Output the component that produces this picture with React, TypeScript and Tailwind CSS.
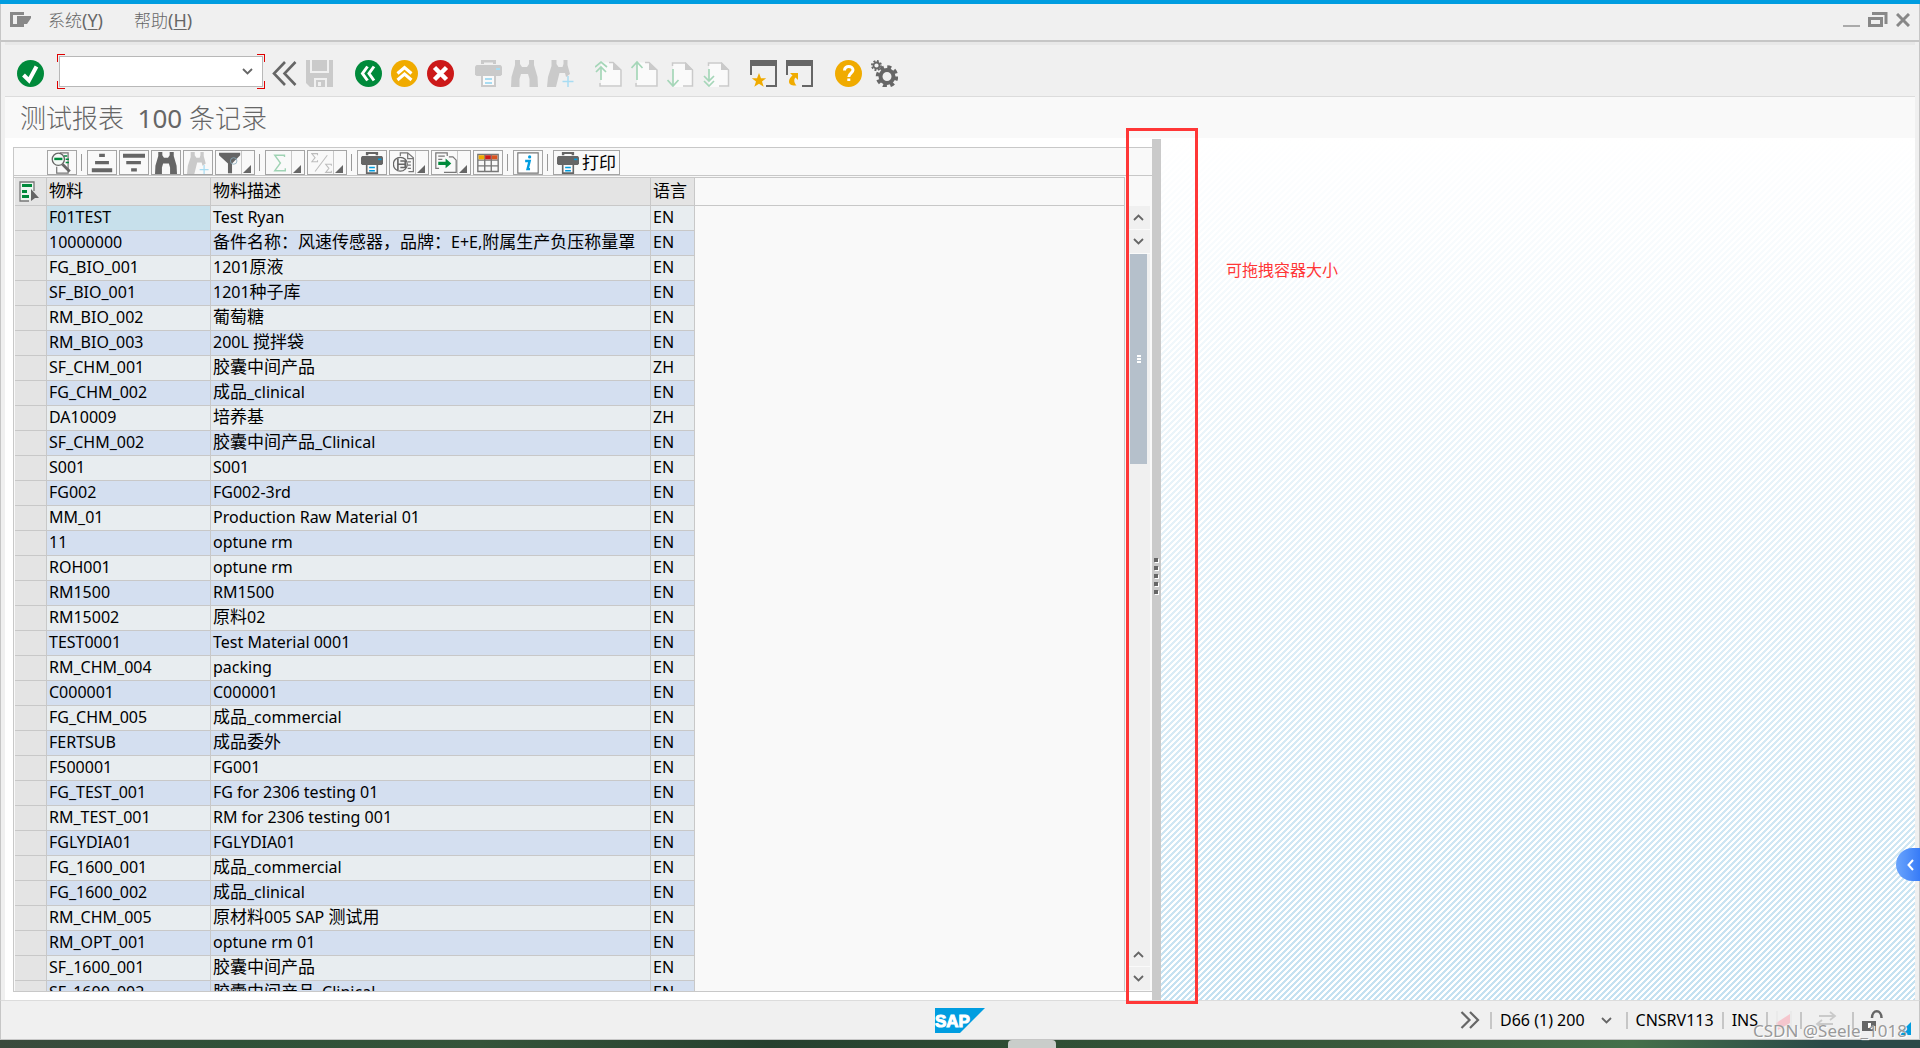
import { useState } from "react";
import type { ReactNode } from "react";

const rows: [string, string, string][] = [
  ["F01TEST", "Test Ryan", "EN"],
  ["10000000", "备件名称：风速传感器，品牌：E+E,附属生产负压称量罩", "EN"],
  ["FG_BIO_001", "1201原液", "EN"],
  ["SF_BIO_001", "1201种子库", "EN"],
  ["RM_BIO_002", "葡萄糖", "EN"],
  ["RM_BIO_003", "200L 搅拌袋", "EN"],
  ["SF_CHM_001", "胶囊中间产品", "ZH"],
  ["FG_CHM_002", "成品_clinical", "EN"],
  ["DA10009", "培养基", "ZH"],
  ["SF_CHM_002", "胶囊中间产品_Clinical", "EN"],
  ["S001", "S001", "EN"],
  ["FG002", "FG002-3rd", "EN"],
  ["MM_01", "Production Raw Material 01", "EN"],
  ["11", "optune rm", "EN"],
  ["ROH001", "optune rm", "EN"],
  ["RM1500", "RM1500", "EN"],
  ["RM15002", "原料02", "EN"],
  ["TEST0001", "Test Material 0001", "EN"],
  ["RM_CHM_004", "packing", "EN"],
  ["C000001", "C000001", "EN"],
  ["FG_CHM_005", "成品_commercial", "EN"],
  ["FERTSUB", "成品委外", "EN"],
  ["F500001", "FG001", "EN"],
  ["FG_TEST_001", "FG for 2306 testing 01", "EN"],
  ["RM_TEST_001", "RM for 2306 testing 001", "EN"],
  ["FGLYDIA01", "FGLYDIA01", "EN"],
  ["FG_1600_001", "成品_commercial", "EN"],
  ["FG_1600_002", "成品_clinical", "EN"],
  ["RM_CHM_005", "原材料005 SAP 测试用", "EN"],
  ["RM_OPT_001", "optune rm 01", "EN"],
  ["SF_1600_001", "胶囊中间产品", "EN"],
  ["SF_1600_002", "胶囊中间产品_Clinical", "EN"],
];

// Chinese runs are set one step larger than the latin text around them
function Mixed({ text, cjk = "text-[17px]" }: { text: string; cjk?: string }) {
  const parts = text.split(/([\u3000-\u9fff\uff00-\uffef]+)/);
  return (
    <>
      {parts.map((p, i) =>
        i % 2 ? (
          <span key={i} className={cjk}>
            {p}
          </span>
        ) : (
          p
        )
      )}
    </>
  );
}

function Svg({ size = 27, children }: { size?: number; children: ReactNode }) {
  return (
    <svg width={size} height={size} viewBox="0 0 27 27" fill="none" className="block shrink-0" aria-hidden="true">
      {children}
    </svg>
  );
}

const Check = () => (
  <Svg>
    <circle cx="13.5" cy="13.5" r="13.5" fill="#008a3b" />
    <path d="M6.500 15l5.500 5.500L19.500 6.500" stroke="#fff" strokeWidth="4" />
  </Svg>
);

const Save = () => (
  <Svg>
    <path d="M0 0h4v13h19V0h4v27H21V18H8v9H4l-4-4z" fill="#cacaca" />
    <path d="M6 0h15v11H6zM10 20h9v7h-9z" fill="#cacaca" />
    <path d="M12 22h3v4h-3z" fill="#f0f0f0" />
  </Svg>
);

const Back = () => (
  <Svg>
    <circle cx="13.5" cy="13.5" r="13.5" fill="#008a3b" />
    <path d="M12.500 6.500l-5 7 5 7M19 6.500l-5 7 5 7" stroke="#fff" strokeWidth="3" />
  </Svg>
);

const Up = () => (
  <Svg>
    <circle cx="13.5" cy="13.5" r="13.5" fill="#f0ab00" />
    <path d="M6.500 13.500l7-6 7 6M6.500 20l7-6 7 6" stroke="#fff" strokeWidth="3" />
  </Svg>
);

const Cancel = () => (
  <Svg>
    <circle cx="13.5" cy="13.5" r="13.5" fill="#cc1919" />
    <path d="M7.500 7.500l12 12M19.500 7.500l-12 12" stroke="#fff" strokeWidth="4.500" />
  </Svg>
);

function Printer({ color = "#666", blue = "#009de0", size = 27 }) {
  return (
    <Svg size={size}>
      <path d="M6 0h15v4h-3V2.500H9V4H6z" fill={color} />
      <path d="M1.500 5h24l1.500 1.500v8L25.500 16h-24L0 14.500v-8z" fill={color} />
      <path d="M21 8h4v2h-4z" fill={blue} />
      <path d="M7 16v10h13V16" fill="#fafafa" stroke={color} strokeWidth="2" />
      <path d="M10 18h7v2h-7zM10 22h7v2h-7z" fill={blue} />
    </Svg>
  );
}

function Binoculars({ color = "#666", plus = false, size = 27 }) {
  return (
    <Svg size={size}>
      {plus ? (
        <>
          <path d="M4.500 0h5v4l2 3h4l1-3V0h4v5l2.500 9-4 3-1-4h-5.500L9 27H0l1-10 3.500-11z" fill={color} />
          <path d="M21 16v11M15.500 21.500h11" stroke="#a8dcf2" strokeWidth="1.500" />
        </>
      ) : (
        <path d="M4 0h5v4l2 3h5l2-3V0h5v5l3.500 12L27 27h-8.500v-8L17 14h-7l-1.500 5v8H0l.5-10L4 5z" fill={color} />
      )}
    </Svg>
  );
}

// page with a green arrow; n = number of arrow heads
function Page({ up = false, n = 1 }) {
  return (
    <Svg>
      <path d="M6 2.500h12l7 7V27H6z" fill="#fafafa" />
      <path d={up ? "M14 2.500h4l8 7.500v16H5v-3" : "M5.500 6V3h13l7 7v16H16"} stroke="#cacaca" strokeWidth="1.500" />
      <path d="M18 2l8 8h-8z" fill="#cacaca" />
      {up ? (
        <path d={n === 2 ? "M6 20V8M0 7l6-5 6 5M1 12l5-5 5 5" : "M6 20V2M.5 8L6 2l5.500 6"} stroke="#a5d6b8" strokeWidth="1.700" />
      ) : (
        <path d={n === 2 ? "M6 9v12M1 16l5 5 5-5M1 21l5 5 5-5" : "M6 9v16M.5 20L6 26l5.500-6"} stroke="#a5d6b8" strokeWidth="1.700" />
      )}
    </Svg>
  );
}

function WindowIcon({ shortcut = false }) {
  return (
    <Svg>
      <path d="M0 0h27v6H0z" fill="#666" />
      <path d="M1 5v10M26 5v21H16" stroke="#666" strokeWidth="2" />
      {shortcut ? (
        <path d="M4 13h8v7l-2.500-2.500c-2 2-1.500 5 1 8C6 26 3 24.500 3 21.500c0-2.500 1.500-4.500 3.500-6z" fill="#f0ab00" />
      ) : (
        <path d="M9 13l2 5.300h5.200L12 21.600l1.700 5.200L9 23.700l-4.700 3.100L6 21.600l-4.200-3.300H7z" fill="#f0ab00" />
      )}
    </Svg>
  );
}

const Help = () => (
  <Svg>
    <circle cx="13.5" cy="13.5" r="13.5" fill="#f0ab00" />
    <path d="M9.500 10.500c0-5.500 8.500-5 8.500-.5 0 3-4.200 3.300-4.200 7" stroke="#fff" strokeWidth="3" />
    <path d="M12.300 18.500h3V21h-3z" fill="#fff" />
  </Svg>
);

const Gears = () => (
  <Svg>
    <circle cx="16" cy="16.5" r="6.5" stroke="#666" strokeWidth="4" />
    <circle cx="16" cy="16.5" r="9.5" stroke="#666" strokeWidth="3.500" strokeDasharray="4 3.460" />
    <circle cx="5.5" cy="5.5" r="3" stroke="#666" strokeWidth="1.800" />
    <circle cx="5.5" cy="5.5" r="4.6" stroke="#666" strokeWidth="1.800" strokeDasharray="1.900 1.700" />
  </Svg>
);

const Chevron = ({ up = false, color = "#666" }) => (
  <svg width="11" height="7" viewBox="0 0 11 7" fill="none" aria-hidden="true">
    <path d={up ? "M1 6l4.500-4.500L10 6" : "M1 1l4.500 4.500L10 1"} stroke={color} strokeWidth="1.800" />
  </svg>
);

const Details = () => (
  <Svg size={22}>
    <path d="M11 1h10v25H7v-8M11 1v3" stroke="#777" strokeWidth="1.500" />
    <path d="M16 5h4M18 9h4M18 13h4" stroke="#008a3b" strokeWidth="1.800" />
    <circle cx="9" cy="9" r="7.5" fill="#f5faf7" stroke="#666" strokeWidth="1.600" />
    <path d="M4 7h10v3H4z" fill="#008a3b" />
    <path d="M14 15l9 9" stroke="#666" strokeWidth="3.500" />
  </Svg>
);

const SortAsc = () => (
  <Svg size={22}>
    <path d="M10 2h7v4h-7zM5 11h17v4H5zM1 20h25v5H1z" fill="#666" />
  </Svg>
);

const SortDesc = () => (
  <Svg size={22}>
    <path d="M0 2h27v5H0zM4 11h18v4H4zM10 20h7v4h-7z" fill="#666" />
  </Svg>
);

const Filter = () => (
  <Svg size={22}>
    <path d="M0 1h26v3L16 14v12h-5V14L0 4z" fill="#666" />
    <circle cx="18" cy="11" r="4" stroke="#8ab" strokeWidth="1" />
  </Svg>
);

const Sum = () => (
  <Svg size={22}>
    <path d="M19 6V4H7l7 9.500L7 23h13v-3" stroke="#9fd3b4" strokeWidth="1.700" />
  </Svg>
);

const Subtotal = () => (
  <Svg size={22}>
    <path d="M8 4V2H1l4 5-4 5h7v-2M25 17v-2h-7l4 5-4 5h7v-2M5 24L20 4" stroke="#bdbdbd" strokeWidth="1.300" />
  </Svg>
);

const PrintView = () => (
  <Svg size={22}>
    <path d="M9 5V1h9l7 6v17h-6M18 1v7h7" stroke="#777" strokeWidth="1.500" />
    <path d="M18 12h4M18 16h4M18 20h4" stroke="#777" strokeWidth="1.500" />
    <circle cx="9" cy="15" r="8.5" fill="#f6f6f6" stroke="#666" strokeWidth="1.600" />
    <path d="M6 8v14M6 15h9M9 11h6v8H9" stroke="#666" strokeWidth="2" />
  </Svg>
);

const Export = () => (
  <Svg size={22}>
    <path d="M15 5V1H1v19h4M17 6h5l4 4v15H11" stroke="#777" strokeWidth="1.500" />
    <path d="M4 5h8M4 9h5" stroke="#777" strokeWidth="1.500" />
    <path d="M4 12h9V8l7 6-7 6v-4H4z" fill="#008a3b" />
  </Svg>
);

const Layout = () => (
  <Svg size={22}>
    <path d="M1 3h25v21H1zM1 10h25M1 17h25M9.500 4v20M17.500 4v20" stroke="#777" strokeWidth="1.700" />
    <path d="M2 4h7v5H2z" fill="#f0ab00" />
    <path d="M10 4h7v5h-7z" fill="#cc1919" />
    <path d="M18 4h7v5h-7z" fill="#d9531e" />
  </Svg>
);

const Info = () => (
  <Svg size={22}>
    <path d="M1 1h25v25H1z" fill="#fff" stroke="#777" strokeWidth="1.400" />
    <circle cx="15.5" cy="6" r="2" fill="#009de0" />
    <path d="M10 11h5.500l-2.500 10h3" stroke="#009de0" strokeWidth="3" />
  </Svg>
);

const SelectAll = () => (
  <svg width="21" height="21" viewBox="0 0 21 21" fill="none" className="block" aria-hidden="true">
    <path d="M15 10V1H1v19h9" fill="#eef5f0" stroke="#777" strokeWidth="1.300" />
    <path d="M3 3h10v3H3zM3 9h5v3H3zM3 14h7v3H3z" fill="#008a3b" />
    <path d="M12 8l8 9h-4l-4 3z" fill="#666" />
  </svg>
);

function ToolButton({ label, children }: { label: string; children: ReactNode }) {
  return (
    <button type="button" aria-label={label} title={label} className="block shrink-0">
      {children}
    </button>
  );
}

function GridButton({ label, menu = false, children }: { label: string; menu?: boolean; children: ReactNode }) {
  return (
    <button
      type="button"
      aria-label={label}
      title={label}
      className={`relative flex h-[25px] shrink-0 items-center border border-[#a5a5a5] px-[3px] ${menu ? "w-10" : "min-w-[30px]"}`}
    >
      {children}
      {menu && (
        <>
          <span className="absolute inset-y-0 left-[25px] border-l border-[#c8c8c8]" />
          <svg width="8" height="8" viewBox="0 0 8 8" className="absolute right-[3px] bottom-[1px]" aria-hidden="true">
            <path d="M8 0v8H0z" fill="#666" />
          </svg>
        </>
      )}
    </button>
  );
}

const GridSep = () => <span className="mx-0.5 mt-1 h-[17px] w-0.5 shrink-0 border-l border-[#999]" />;

const StatusSep = () => <span className="h-[17px] w-0.5 shrink-0 bg-[#c6c6c6]" />;

function MenuBar() {
  return (
    <header className="flex h-[38px] shrink-0 items-center border-x border-b-2 border-[#c6c6c6] bg-[#f0f0f0] px-[9px] pb-1 text-[#666]">
      <button type="button" aria-label="菜单">
        <svg width="22" height="16" viewBox="0 0 22 16" aria-hidden="true">
          <path d="M0 0h14v3H3v9h11v3H0zM7 4h14v2l-4 6H7z" fill="#888" />
        </svg>
      </button>
      <nav className="ml-4 flex flex-1 gap-[31px] text-[18px]">
        <button type="button">
          <Mixed text="系统" cjk="text-[17px] font-light" />(<u className="underline-offset-2">Y</u>)
        </button>
        <button type="button">
          <Mixed text="帮助" cjk="text-[17px] font-light" />(<u className="underline-offset-2">H</u>)
        </button>
      </nav>
      <div className="flex items-center gap-2">
        <button type="button" aria-label="最小化" className="pt-3">
          <span className="block h-0.5 w-[17px] bg-[#aaa]" />
        </button>
        <button type="button" aria-label="还原">
          <svg width="20" height="16" viewBox="0 0 20 16" fill="none" aria-hidden="true">
            <path d="M4 1.500h14V12" stroke="#888" strokeWidth="3" />
            <path d="M1.500 6.500h12v7h-12z" stroke="#888" strokeWidth="3" />
          </svg>
        </button>
        <button type="button" aria-label="关闭">
          <svg width="14" height="14" viewBox="0 0 14 14" aria-hidden="true">
            <path d="M1 1l12 12M13 1L1 13" stroke="#888" strokeWidth="3" />
          </svg>
        </button>
      </div>
    </header>
  );
}

function Toolbar() {
  const [command, setCommand] = useState("");
  return (
    <div className="flex h-[55px] shrink-0 items-center border-t-[3px] border-b border-t-[#e8e8e8] border-b-[#dcdcdc] bg-[#f0f0f0] pt-1.5 pl-3">
      <ToolButton label="回车">
        <Check />
      </ToolButton>
      <div className="relative mb-1 ml-[13px] p-0.5">
        <span className="absolute top-0 left-0 size-2 border-t border-l border-[#e00000]" />
        <span className="absolute top-0 right-0 size-2 border-t border-r border-[#e00000]" />
        <span className="absolute bottom-0 left-0 size-2 border-b border-l border-[#e00000]" />
        <span className="absolute right-0 bottom-0 size-2 border-r border-b border-[#e00000]" />
        <div className="flex h-[31px] w-[204px] items-center border border-[#b8b8b8] bg-white">
          <input
            type="text"
            aria-label="命令"
            value={command}
            onChange={(e) => setCommand(e.target.value)}
            className="h-full min-w-0 flex-1 px-1 outline-none"
          />
          <button type="button" aria-label="历史命令" className="px-[9px]">
            <Chevron />
          </button>
        </div>
      </div>
      <div className="ml-[7px] flex gap-[9px]">
        <ToolButton label="隐藏命令栏">
          <svg width="25" height="27" viewBox="0 0 25 27" fill="none" aria-hidden="true">
            <path d="M13 2L2 13.500 13 25M23.500 2l-11 11.500L23.500 25" stroke="#666" strokeWidth="2.600" />
          </svg>
        </ToolButton>
        <ToolButton label="保存">
          <Save />
        </ToolButton>
      </div>
      <div className="ml-[22px] flex gap-[9px]">
        <ToolButton label="返回"><Back /></ToolButton>
        <ToolButton label="退出"><Up /></ToolButton>
        <ToolButton label="取消"><Cancel /></ToolButton>
      </div>
      <div className="ml-[21px] flex gap-[9px]">
        <ToolButton label="打印"><Printer color="#cacaca" blue="#a8dcf2" /></ToolButton>
        <ToolButton label="查找"><Binoculars color="#cacaca" /></ToolButton>
        <ToolButton label="继续查找"><Binoculars color="#cacaca" plus /></ToolButton>
      </div>
      <div className="ml-[21px] flex gap-[9px]">
        <ToolButton label="第一页"><Page up n={2} /></ToolButton>
        <ToolButton label="上一页"><Page up /></ToolButton>
        <ToolButton label="下一页"><Page /></ToolButton>
        <ToolButton label="最后一页"><Page n={2} /></ToolButton>
      </div>
      <div className="ml-5 flex gap-[9px]">
        <ToolButton label="新建会话"><WindowIcon /></ToolButton>
        <ToolButton label="创建快捷方式"><WindowIcon shortcut /></ToolButton>
      </div>
      <div className="ml-[22px] flex gap-[9px]">
        <ToolButton label="帮助"><Help /></ToolButton>
        <ToolButton label="定制本地布局"><Gears /></ToolButton>
      </div>
    </div>
  );
}

function GridToolbar() {
  return (
    <div className="flex h-7 shrink-0 items-start gap-0.5 border-b border-[#c8c8c8] bg-[#f9f9f9] pt-0.5 pl-[33px]">
      <GridButton label="明细"><Details /></GridButton>
      <GridSep />
      <GridButton label="升序排序"><SortAsc /></GridButton>
      <GridButton label="降序排序"><SortDesc /></GridButton>
      <GridButton label="查找"><Binoculars size={22} /></GridButton>
      <GridButton label="继续查找"><Binoculars size={22} color="#cacaca" plus /></GridButton>
      <GridButton label="设置过滤器" menu><Filter /></GridButton>
      <GridSep />
      <GridButton label="总计" menu><Sum /></GridButton>
      <GridButton label="小计" menu><Subtotal /></GridButton>
      <GridSep />
      <GridButton label="打印"><Printer size={22} /></GridButton>
      <GridButton label="视图" menu><PrintView /></GridButton>
      <GridButton label="导出" menu><Export /></GridButton>
      <GridButton label="更改布局"><Layout /></GridButton>
      <GridSep />
      <GridButton label="信息"><Info /></GridButton>
      <GridSep />
      <GridButton label="打印列表">
        <Printer size={22} />
        <span className="ml-[3px] leading-none">
          <Mixed text="打印" />
        </span>
      </GridButton>
    </div>
  );
}

function DataTable() {
  const th = "h-7 border-r border-b border-[#c8c8c8] bg-[#e4e4e4] p-0 pb-0.5 pl-0.5 text-left leading-5 font-normal";
  const td = "h-[25px] border-r border-b border-[#c8c8c8] p-0 pb-0.5 pl-0.5 leading-[22px] whitespace-nowrap";
  return (
    <table className="w-[680px] table-fixed border-separate border-spacing-0">
      <colgroup>
        <col className="w-8" />
        <col className="w-[164px]" />
        <col className="w-[440px]" />
        <col className="w-11" />
      </colgroup>
      <thead>
        <tr>
          <th className={th}>
            <button type="button" aria-label="全选" className="block pt-0.5 pl-0.5">
              <SelectAll />
            </button>
          </th>
          <th className={th}><Mixed text="物料" /></th>
          <th className={th}><Mixed text="物料描述" /></th>
          <th className={th}><Mixed text="语言" /></th>
        </tr>
      </thead>
      <tbody>
        {rows.map(([id, text, lang], i) => (
          <tr key={id} className={i % 2 ? "bg-[#d4dff0]" : "bg-[#e8edf0]"}>
            <td className={`${td} bg-[#e4e4e4]`} />
            <td className={i === 0 ? `${td} bg-[#c7e0eb]` : td}>{id}</td>
            <td className={td}><Mixed text={text} /></td>
            <td className={td}>{lang}</td>
          </tr>
        ))}
      </tbody>
    </table>
  );
}

function ScrollButton({ up = false }) {
  return (
    <button
      type="button"
      aria-label={up ? "向上滚动" : "向下滚动"}
      className="flex h-6 w-full shrink-0 items-center justify-center border-b border-[#fafafa] bg-[#f0f0f0] pr-0.5"
    >
      <Chevron up={up} />
    </button>
  );
}

function Scrollbar() {
  return (
    <div className="mt-[29px] ml-1 flex w-[21px] flex-col bg-[#f0f0f0]">
      <ScrollButton up />
      <ScrollButton />
      <div className="flex-1">
        <div className="ml-px flex h-[210px] w-[17px] flex-col items-center justify-center gap-px bg-[#b5c0cb]">
          <span className="h-0.5 w-1 bg-white" />
          <span className="h-0.5 w-1 bg-white" />
          <span className="h-0.5 w-1 bg-white" />
        </div>
      </div>
      <ScrollButton up />
      <ScrollButton />
    </div>
  );
}

function Splitter() {
  return (
    <div
      role="separator"
      aria-orientation="vertical"
      className="mt-px flex w-[9px] shrink-0 cursor-col-resize flex-col items-center justify-center gap-1 bg-[#cacaca] pt-3 pr-px"
    >
      {[0, 1, 2, 3, 4].map((n) => (
        <span key={n} className="size-1 bg-[#666] shadow-[1px_1px_0_#fff]" />
      ))}
    </div>
  );
}

function StatusBar() {
  return (
    <footer className="relative flex h-10 shrink-0 items-center border border-[#c6c6c6] border-t-[#dcdcdc] bg-[#f0f0f0]">
      <div className="flex-1 pl-9" />
      <svg width="50" height="25" viewBox="0 0 50 25" role="img" aria-label="SAP">
        <path d="M0 0h50L25 25H0z" fill="#009de0" />
        <text x="0" y="19" fontSize="17" fontWeight="700" fill="#fff" stroke="#fff" strokeWidth="1" className="font-['Liberation_Sans',sans-serif]">
          SAP
        </text>
      </svg>
      <div className="flex flex-1 items-center justify-end gap-2 pr-9">
        <button type="button" aria-label="展开" className="pr-0.5">
          <svg width="20" height="18" viewBox="0 0 20 18" fill="none" aria-hidden="true">
            <path d="M1.500 1l8 8-8 8M10 1l8 8-8 8" stroke="#666" strokeWidth="2.200" />
          </svg>
        </button>
        <StatusSep />
        <button type="button" className="flex items-center gap-4 pr-1.5">
          D66 (1) 200
          <Chevron />
        </button>
        <StatusSep />
        <span>CNSRV113</span>
        <StatusSep />
        <span>INS</span>
        <StatusSep />
        <svg width="16" height="19" viewBox="0 0 16 19" aria-hidden="true">
          <path d="M0 12l14-9v9L2 19z" fill="#f5c6cd" />
          <path d="M1 0v17M15 0v17" stroke="#e4e4e4" />
        </svg>
        <StatusSep />
        <svg width="34" height="18" viewBox="0 0 34 18" fill="none" aria-hidden="true">
          <path d="M9 5h16M20 1l5 4-5 4M23 13H7M12 9l-5 4 5 4" stroke="#cacaca" strokeWidth="1.800" />
        </svg>
        <StatusSep />
        <svg width="21" height="21" viewBox="0 0 21 21" fill="none" aria-hidden="true">
          <path d="M0 11h14v10H0z" fill="#666" />
          <path d="M10 8c0-9 9.500-9 9.500 0" stroke="#666" strokeWidth="2.500" />
          <path d="M6 13h3v5H6z" fill="#fff" />
        </svg>
      </div>
      <svg width="13" height="13" viewBox="0 0 13 13" className="absolute right-2 bottom-1" aria-hidden="true">
        <path d="M13 0v13H0z" fill="#009de0" />
      </svg>
      <span className="absolute right-3 -bottom-1 text-[17px] leading-6 text-[#999] [text-shadow:1px_1px_0_#fff]">
        CSDN @Seele_1018
      </span>
    </footer>
  );
}

export default function App() {
  return (
    <div className="relative flex h-screen flex-col overflow-hidden bg-[#f0f0f0] font-['Noto_Sans','Noto_Sans_CJK_SC',sans-serif] text-[16px] text-black">
      <div className="h-1 shrink-0 bg-[#009de0]" />
      <MenuBar />
      <main className="flex min-h-0 flex-1 flex-col border-x border-[#c6c6c6] px-1">
        <Toolbar />
        <h1 className="flex h-[41px] shrink-0 items-center bg-[#f9f9f9] pt-0.5 pl-[15px] text-[26px] whitespace-pre text-[#666]">
          <span>
            <Mixed text="测试报表  100 条记录" cjk="font-light" />
          </span>
        </h1>
        <div className="flex min-h-0 flex-1 bg-white">
          <section className="mt-[9px] mb-2 ml-2 flex w-[1139px] shrink-0 flex-col border border-r-0 border-[#c8c8c8] bg-[#f9f9f9]">
            <GridToolbar />
            <div className="flex min-h-0 flex-1 pt-px">
              <div className="flex-1 overflow-hidden border-t border-r border-[#c8c8c8] bg-[#f9f9f9] pl-px">
                <div className="flex">
                  <DataTable />
                  <div className="h-7 flex-1 border-b border-[#c8c8c8]" />
                </div>
              </div>
              <Scrollbar />
              <span className="w-0.5" />
            </div>
          </section>
          <Splitter />
          <aside className="flex-1 bg-[linear-gradient(#fff,#ffffff00),linear-gradient(135deg,#c4e1f1_25%,#fff_25%_50%,#c4e1f1_50%_75%,#fff_75%)] bg-size-[100%_100%,6px_6px]">
            <p className="mt-[120px] ml-[65px] text-[16px] leading-6 text-[#ff3737]">可拖拽容器大小</p>
          </aside>
        </div>
      </main>
      <StatusBar />
      <div className="flex h-2 shrink-0 justify-center bg-[linear-gradient(90deg,#3a4a3c,#2f5138_12%,#35543a_25%,#26402f_40%,#2f4f35_55%,#3a5a3c_72%,#44704a_85%,#2a4a48_95%)]">
        <span className="ml-36 h-2 w-12 rounded-t bg-[#c9cdca]" />
      </div>

      {/* marker round the splitter */}
      <div className="pointer-events-none absolute top-32 bottom-11 left-[1126px] w-[72px] border-[3px] border-[#ff3737]" />

      {/* side drawer handle */}
      <button
        type="button"
        aria-label="展开侧栏"
        className="absolute top-[848px] right-0 flex h-[33px] w-6 items-center justify-center rounded-l-full bg-linear-to-r from-[#6aa4fc] to-[#377bf7] pl-1"
      >
        <svg width="7" height="12" viewBox="0 0 7 12" fill="none" aria-hidden="true">
          <path d="M6 1L1.500 6 6 11" stroke="#fff" strokeWidth="2" />
        </svg>
      </button>
    </div>
  );
}
